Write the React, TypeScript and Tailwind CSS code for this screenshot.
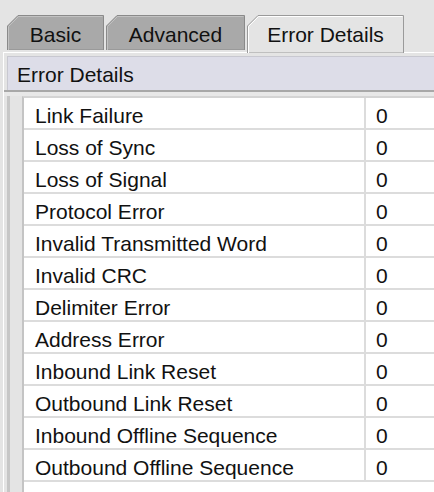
const rows = [
  "Link Failure",
  "Loss of Sync",
  "Loss of Signal",
  "Protocol Error",
  "Invalid Transmitted Word",
  "Invalid CRC",
  "Delimiter Error",
  "Address Error",
  "Inbound Link Reset",
  "Outbound Link Reset",
  "Inbound Offline Sequence",
  "Outbound Offline Sequence",
];

function Tab(props: { label: string; width: number; active?: boolean }) {
  const w = props.width;
  const h = props.active ? 38 : 35;
  return (
    <div
      className={
        props.active
          ? "relative z-10 h-[38px] shrink-0 text-center pt-[8px] leading-[24px]"
          : "relative h-[35px] shrink-0 text-center pt-[8px] leading-[24px]"
      }
      style={{ width: w }}
    >
      <svg className="absolute inset-0" width={w} height={h}>
        <polygon
          points={`0.5,${h} 0.5,11 11,0.5 ${w - 0.5},0.5 ${w - 0.5},${h}`}
          fill={props.active ? "#e4e4e4" : "#a9a9a9"}
          stroke={props.active ? "#9a9a9a" : "#8a8a8a"}
        />
        <polyline
          points={`1.5,${h} 1.5,11.5 11.5,1.5 ${w - 1.5},1.5`}
          fill="none"
          stroke={props.active ? "#ffffff" : "#c2c2c2"}
        />
      </svg>
      <span className="relative">{props.label}</span>
    </div>
  );
}

export default function App() {
  return (
    <div className="w-[434px] h-[492px] overflow-hidden bg-[#e4e4e4] text-[21px] text-[#111] font-['Liberation_Sans',Arial,sans-serif] flex flex-col">
      <div className="flex gap-[2px] pl-[7px] pt-[15px] h-[52px] shrink-0">
        <Tab label="Basic" width={97} />
        <Tab label="Advanced" width={139} />
        <Tab label="Error Details" width={157} active />
      </div>
      <div className="flex-1 ml-[3px] border-l border-t border-white flex flex-col">
        <div className="mt-[3px] ml-[3px] h-[34px] bg-[#dddde8] border-t border-l border-[#c8c8d0] pl-[9px] pt-[6px] leading-[24px] shrink-0">
          Error Details
        </div>
        <div className="h-[2px] bg-[#a8a8a8] shrink-0"></div>
        <div className="h-[4px] bg-[#e8e8e8] shrink-0"></div>
        <div className="flex flex-1">
          <div className="w-[15px] ml-[3px] border-l-[3px] border-[#c6c6c6] shrink-0"></div>
          <div className="flex-1 bg-white border-l-2 border-t-2 border-[#c4c4c4] border-t-[#d4d4d4]">
            {rows.map((r) => (
              <div key={r} className="flex h-[32px] border-b-2 border-[#dcdcdc]">
                <div className="w-[342px] shrink-0 border-r-2 border-[#dcdcdc] pl-[11px] pt-[6px] leading-[24px]">
                  {r}
                </div>
                <div className="pl-[10px] pt-[6px] leading-[24px]">0</div>
              </div>
            ))}
          </div>
        </div>
      </div>
    </div>
  );
}
